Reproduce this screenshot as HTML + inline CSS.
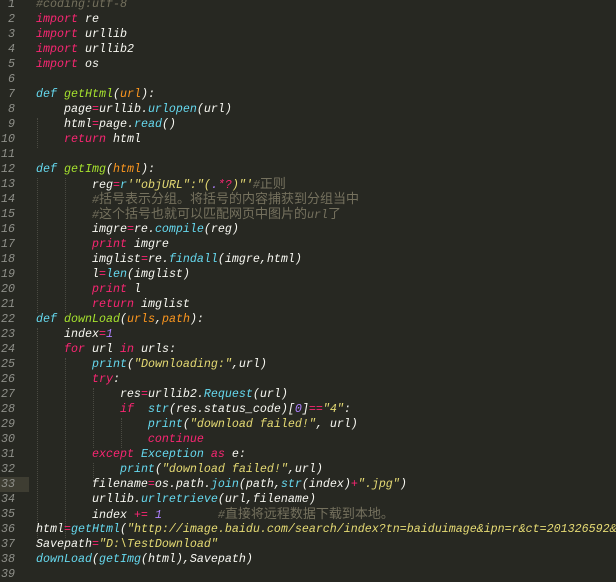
<!DOCTYPE html>
<html><head><meta charset="utf-8">
<style>
html,body{margin:0;padding:0;background:#272822;width:616px;height:582px;overflow:hidden;}
#ed{position:relative;width:616px;height:582px;overflow:hidden;font-family:"Liberation Mono","Noto Sans CJK SC",monospace;font-size:11.67px;font-style:italic;color:#f8f8f2;}
#in{position:absolute;left:0;top:2px;width:616px;height:582px;}
.ln{position:absolute;left:0;width:616px;height:15px;line-height:15px;white-space:pre;}
.n{position:absolute;right:601px;width:26px;text-align:right;color:#8f908a;}
.c{position:absolute;left:36px;}
.k{color:#f92672}.d{color:#66d9ef}.f{color:#a6e22e}.p{color:#fd971f}.s{color:#e6db74}.m{color:#75715e}.u{color:#ae81ff}.b{color:#66d9ef}
.z{font-size:13px;font-style:normal;display:inline-block;width:13px;text-align:center;}
.hl{position:absolute;left:0;width:29px;height:15px;background:#3e3d32;}
.g{position:absolute;width:0;border-left:1px dotted #4a4a42;}
</style></head><body><div id="ed"><div id="in">
<div class="hl" style="top:475px"></div>
<div class="g" style="left:37px;top:116px;height:30px"></div>
<div class="g" style="left:37px;top:176px;height:135px"></div>
<div class="g" style="left:65px;top:176px;height:135px"></div>
<div class="g" style="left:37px;top:326px;height:210px"></div>
<div class="g" style="left:65px;top:356px;height:180px"></div>
<div class="g" style="left:93px;top:386px;height:60px"></div>
<div class="g" style="left:93px;top:461px;height:15px"></div>
<div class="g" style="left:121px;top:416px;height:30px"></div>

<div class="ln" style="top:-5px"><span class="n">1</span><span class="c m">#coding:utf-8</span></div>
<div class="ln" style="top:10px"><span class="n">2</span><span class="c"><span class="k">import</span> re</span></div>
<div class="ln" style="top:25px"><span class="n">3</span><span class="c"><span class="k">import</span> urllib</span></div>
<div class="ln" style="top:40px"><span class="n">4</span><span class="c"><span class="k">import</span> urllib2</span></div>
<div class="ln" style="top:55px"><span class="n">5</span><span class="c"><span class="k">import</span> os</span></div>
<div class="ln" style="top:70px"><span class="n">6</span></div>
<div class="ln" style="top:85px"><span class="n">7</span><span class="c"><span class="d">def</span> <span class="f">getHtml</span>(<span class="p">url</span>):</span></div>
<div class="ln" style="top:100px"><span class="n">8</span><span class="c">    page<span class="k">=</span>urllib.<span class="b">urlopen</span>(url)</span></div>
<div class="ln" style="top:115px"><span class="n">9</span><span class="c">    html<span class="k">=</span>page.<span class="b">read</span>()</span></div>
<div class="ln" style="top:130px"><span class="n">10</span><span class="c">    <span class="k">return</span> html</span></div>
<div class="ln" style="top:145px"><span class="n">11</span></div>
<div class="ln" style="top:160px"><span class="n">12</span><span class="c"><span class="d">def</span> <span class="f">getImg</span>(<span class="p">html</span>):</span></div>
<div class="ln" style="top:175px"><span class="n">13</span><span class="c">        reg<span class="k">=</span><span class="d">r</span><span class="s">'"objURL":"(<span class="u">.</span><span class="k">*?</span>)"'</span><span class="m">#<span class="z">正</span><span class="z">则</span></span></span></div>
<div class="ln" style="top:190px"><span class="n">14</span><span class="c m">        #<span class="z">括</span><span class="z">号</span><span class="z">表</span><span class="z">示</span><span class="z">分</span><span class="z">组</span><span class="z">。</span><span class="z">将</span><span class="z">括</span><span class="z">号</span><span class="z">的</span><span class="z">内</span><span class="z">容</span><span class="z">捕</span><span class="z">获</span><span class="z">到</span><span class="z">分</span><span class="z">组</span><span class="z">当</span><span class="z">中</span></span></div>
<div class="ln" style="top:205px"><span class="n">15</span><span class="c m">        #<span class="z">这</span><span class="z">个</span><span class="z">括</span><span class="z">号</span><span class="z">也</span><span class="z">就</span><span class="z">可</span><span class="z">以</span><span class="z">匹</span><span class="z">配</span><span class="z">网</span><span class="z">页</span><span class="z">中</span><span class="z">图</span><span class="z">片</span><span class="z">的</span>url<span class="z">了</span></span></div>
<div class="ln" style="top:220px"><span class="n">16</span><span class="c">        imgre<span class="k">=</span>re.<span class="b">compile</span>(reg)</span></div>
<div class="ln" style="top:235px"><span class="n">17</span><span class="c">        <span class="k">print</span> imgre</span></div>
<div class="ln" style="top:250px"><span class="n">18</span><span class="c">        imglist<span class="k">=</span>re.<span class="b">findall</span>(imgre,html)</span></div>
<div class="ln" style="top:265px"><span class="n">19</span><span class="c">        l<span class="k">=</span><span class="b">len</span>(imglist)</span></div>
<div class="ln" style="top:280px"><span class="n">20</span><span class="c">        <span class="k">print</span> l</span></div>
<div class="ln" style="top:295px"><span class="n">21</span><span class="c">        <span class="k">return</span> imglist</span></div>
<div class="ln" style="top:310px"><span class="n">22</span><span class="c"><span class="d">def</span> <span class="f">downLoad</span>(<span class="p">urls</span>,<span class="p">path</span>):</span></div>
<div class="ln" style="top:325px"><span class="n">23</span><span class="c">    index<span class="k">=</span><span class="u">1</span></span></div>
<div class="ln" style="top:340px"><span class="n">24</span><span class="c">    <span class="k">for</span> url <span class="k">in</span> urls:</span></div>
<div class="ln" style="top:355px"><span class="n">25</span><span class="c">        <span class="b">print</span>(<span class="s">"Downloading:"</span>,url)</span></div>
<div class="ln" style="top:370px"><span class="n">26</span><span class="c">        <span class="k">try</span>:</span></div>
<div class="ln" style="top:385px"><span class="n">27</span><span class="c">            res<span class="k">=</span>urllib2.<span class="b">Request</span>(url)</span></div>
<div class="ln" style="top:400px"><span class="n">28</span><span class="c">            <span class="k">if</span>  <span class="b">str</span>(res.status_code)[<span class="u">0</span>]<span class="k">==</span><span class="s">"4"</span>:</span></div>
<div class="ln" style="top:415px"><span class="n">29</span><span class="c">                <span class="b">print</span>(<span class="s">"download failed!"</span>, url)</span></div>
<div class="ln" style="top:430px"><span class="n">30</span><span class="c">                <span class="k">continue</span></span></div>
<div class="ln" style="top:445px"><span class="n">31</span><span class="c">        <span class="k">except</span> <span class="b">Exception</span> <span class="k">as</span> e:</span></div>
<div class="ln" style="top:460px"><span class="n">32</span><span class="c">            <span class="b">print</span>(<span class="s">"download failed!"</span>,url)</span></div>
<div class="ln" style="top:475px"><span class="n">33</span><span class="c">        filename<span class="k">=</span>os.path.<span class="b">join</span>(path,<span class="b">str</span>(index)<span class="k">+</span><span class="s">".jpg"</span>)</span></div>
<div class="ln" style="top:490px"><span class="n">34</span><span class="c">        urllib.<span class="b">urlretrieve</span>(url,filename)</span></div>
<div class="ln" style="top:505px"><span class="n">35</span><span class="c">        index <span class="k">+=</span> <span class="u">1</span>        <span class="m">#<span class="z">直</span><span class="z">接</span><span class="z">将</span><span class="z">远</span><span class="z">程</span><span class="z">数</span><span class="z">据</span><span class="z">下</span><span class="z">载</span><span class="z">到</span><span class="z">本</span><span class="z">地</span><span class="z">。</span></span></span></div>
<div class="ln" style="top:520px"><span class="n">36</span><span class="c">html<span class="k">=</span><span class="b">getHtml</span>(<span class="s">"http://image.baidu.com/search/index?tn=baiduimage&amp;ipn=r&amp;ct=201326592&amp;cl=2</span></span></div>
<div class="ln" style="top:535px"><span class="n">37</span><span class="c">Savepath<span class="k">=</span><span class="s">"D:\TestDownload"</span></span></div>
<div class="ln" style="top:550px"><span class="n">38</span><span class="c"><span class="b">downLoad</span>(<span class="b">getImg</span>(html),Savepath)</span></div>
<div class="ln" style="top:565px"><span class="n">39</span></div>
</div></div></body></html>
